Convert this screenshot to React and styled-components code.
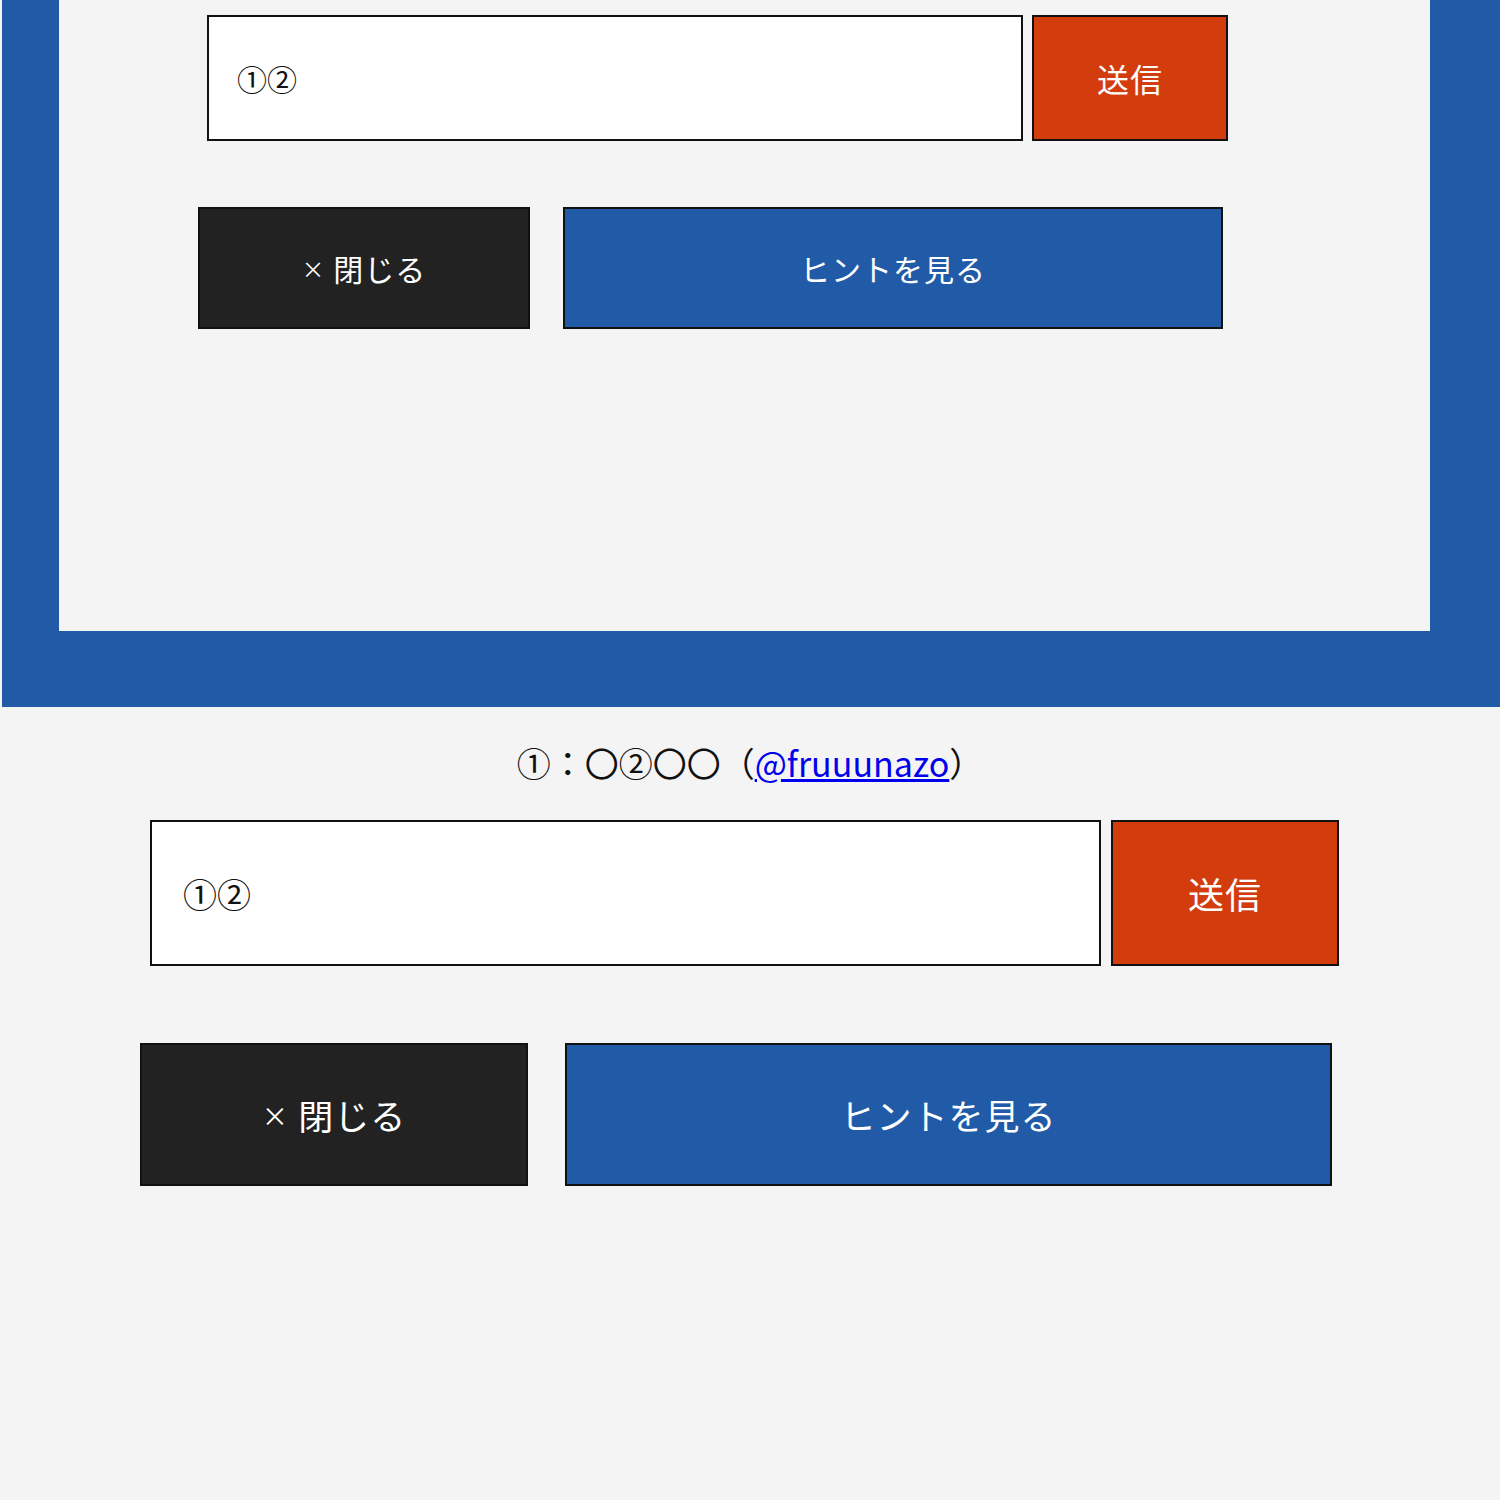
import React from 'react'
import styled, { createGlobalStyle } from 'styled-components'

const GlobalStyle = createGlobalStyle`
  html, body {
    margin: 0;
    padding: 0;
    background: #f4f4f4;
  }
  body {
    font-family: 'Noto Sans CJK JP', 'Noto Sans', sans-serif;
    color: #111;
  }
`

const Page = styled.div`
  width: 1500px;
  overflow: hidden;
  padding-bottom: 315px;
`

// blue frame around the quiz panel (its top edge is scrolled off)
const Frame = styled.div`
  margin-left: 2px;
  background: #215ba8;
  padding: 0 70px 76px 57px;
`

const Panel = styled.div`
  background: #f4f4f4;
  padding: 15px 0 302px;
`

const AnswerRow = styled.form`
  display: flex;
  gap: ${(p) => p.$gap}px;
  margin-left: ${(p) => p.$indent}px;
  height: ${(p) => p.$height}px;
`

const AnswerInput = styled.input`
  box-sizing: border-box;
  width: ${(p) => p.$width}px;
  height: 100%;
  border: 2px solid #111;
  background: #fff;
  padding: 0 0 0 ${(p) => p.$pad}px;
  font-family: inherit;
  font-size: ${(p) => p.$size}px;
  color: #111;
  outline: none;
`

const Button = styled.button`
  box-sizing: border-box;
  width: ${(p) => p.$width}px;
  height: 100%;
  border: 2px solid #111;
  border-radius: 0;
  background: ${(p) => p.$bg};
  color: #fff;
  font-family: inherit;
  font-size: ${(p) => p.$size}px;
  letter-spacing: 1px;
  display: flex;
  align-items: center;
  justify-content: center;
  cursor: pointer;
  padding: 0;
`

const ActionRow = styled.div`
  display: flex;
  gap: ${(p) => p.$gap}px;
  margin-top: ${(p) => p.$top}px;
  margin-left: ${(p) => p.$indent}px;
  height: ${(p) => p.$height}px;
`

const Credit = styled.p`
  margin: 34px 0 0;
  text-align: center;
  font-size: 34px;
  line-height: 44px;
  a {
    color: #0000ee;
    text-decoration: underline;
  }
`

const BottomBlock = styled.div`
  margin-top: 35px;
`

const Times = styled.span`
  font-size: 0.75em;
  margin-right: 0.35em;
`

const Answer = ({ input, submit, actions }) => (
  <>
    <AnswerRow $gap={input.gap} $indent={input.indent} $height={input.height} onSubmit={(e) => e.preventDefault()}>
      <AnswerInput defaultValue="①②" $width={input.width} $pad={input.pad} $size={input.size} />
      <Button type="submit" $bg="#d33d0e" $width={submit.width} $size={submit.size}>
        送信
      </Button>
    </AnswerRow>
    <ActionRow $gap={actions.gap} $top={actions.top} $indent={actions.indent} $height={actions.height}>
      <Button $bg="#222222" $width={actions.close} $size={actions.size}>
        <Times>×</Times>閉じる
      </Button>
      <Button $bg="#215ba8" $width={actions.hint} $size={actions.size}>
        ヒントを見る
      </Button>
    </ActionRow>
  </>
)

export default function App() {
  return (
    <Page>
      <GlobalStyle />
      <Frame>
        <Panel>
          <Answer
            input={{ gap: 9, indent: 148, height: 126, width: 816, pad: 28, size: 30 }}
            submit={{ width: 196, size: 32 }}
            actions={{ gap: 33, top: 66, indent: 139, height: 122, close: 332, hint: 660, size: 30 }}
          />
        </Panel>
      </Frame>
      <Credit>
        ①：〇②〇〇（<a href="#">@fruuunazo</a>）
      </Credit>
      <BottomBlock>
        <Answer
          input={{ gap: 10, indent: 150, height: 146, width: 951, pad: 31, size: 34 }}
          submit={{ width: 228, size: 36 }}
          actions={{ gap: 37, top: 77, indent: 140, height: 143, close: 388, hint: 767, size: 35 }}
        />
      </BottomBlock>
    </Page>
  )
}
